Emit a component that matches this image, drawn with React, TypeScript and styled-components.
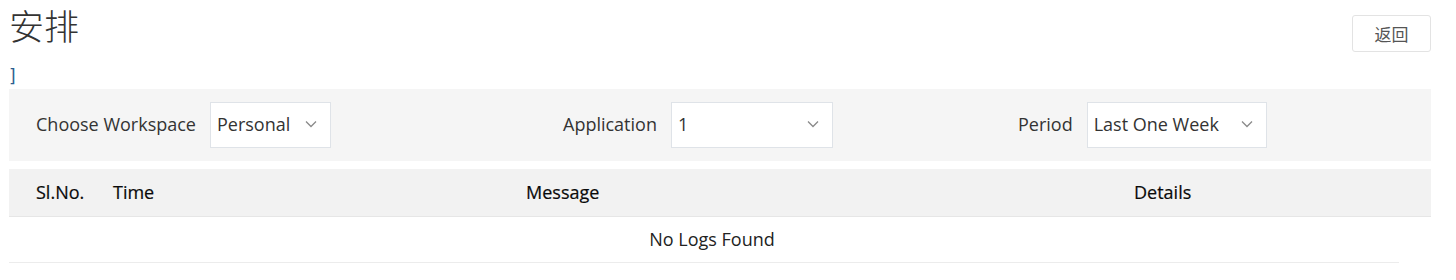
import React from "react";
import styled, { createGlobalStyle } from "styled-components";

const Global = createGlobalStyle`
  html, body { margin: 0; padding: 0; background: #ffffff; }
  body { font-family: "Open Sans", "Noto Sans CJK SC", sans-serif; color: #333; }
  * { box-sizing: border-box; }
`;

const Page = styled.div`
  padding: 0 25px 0 9px;
  width: 1456px;
`;

const Header = styled.div`
  display: flex;
  justify-content: space-between;
  align-items: flex-start;
  height: 66px;
`;

const Title = styled.h1`
  margin: 2px 0 0 0;
  font-family: "Noto Sans CJK SC", sans-serif;
  font-weight: 300;
  font-size: 35px;
  line-height: 46px;
  color: #333;
`;

const BackButton = styled.button`
  margin-top: 15px;
  width: 79px;
  height: 37px;
  border: 1px solid #e3e3e3;
  border-radius: 3px;
  background: #fff;
  font-family: "Noto Sans CJK SC", sans-serif;
  font-size: 17px;
  color: #555;
  padding: 0;
`;

const Bracket = styled.div`
  height: 23px;
  font-family: "DejaVu Sans", sans-serif;
  font-size: 17px;
  line-height: 20px;
  color: #2b5d8e;
`;

const FilterBar = styled.div`
  display: grid;
  grid-template-columns: 527px 455px 1fr;
  align-items: center;
  height: 72px;
  background: #f5f5f5;
  padding-left: 27px;
`;

const Field = styled.div`
  display: flex;
  align-items: center;
  gap: 14px;
`;

const Label = styled.span`
  font-size: 18px;
  line-height: 24px;
  color: #333;
  margin-top: -3px;
`;

const Select = styled.div<{ $w: number }>`
  width: ${(p) => p.$w}px;
  height: 46px;
  background: #fff;
  border: 1px solid #dfe3e8;
  display: flex;
  align-items: center;
  justify-content: space-between;
  padding: 0 13px 2px 6px;
  font-size: 18px;
  color: #333;
`;

const Chevron = () => (
  <svg width="12" height="8" viewBox="0 0 12 8" fill="none">
    <path d="M1 1.5 L6 6.5 L11 1.5" stroke="#8a8a8a" strokeWidth="1.3" />
  </svg>
);

const Table = styled.div`
  margin-top: 8px;
`;

const HeadRow = styled.div`
  display: grid;
  grid-template-columns: 77px 413px 608px 1fr;
  align-items: center;
  height: 48px;
  background: #f2f2f2;
  border-bottom: 1px solid #e6e6e6;
  padding: 0 0 2px 27px;
`;

const HeadCell = styled.div`
  font-size: 18px;
  color: #0a0a0a;
  -webkit-text-stroke: 0.2px #0a0a0a;
`;

const EmptyRow = styled.div`
  width: 1390px;
  height: 46px;
  border-bottom: 1px solid #ececec;
  display: flex;
  align-items: center;
  justify-content: center;
  padding: 0 0 2px 16px;
  font-size: 18px;
  color: #222;
`;

export default function App() {
  return (
    <>
      <Global />
      <Page>
        <Header>
          <Title>安排</Title>
          <BackButton>返回</BackButton>
        </Header>
        <Bracket>]</Bracket>
        <FilterBar>
          <Field>
            <Label>Choose Workspace</Label>
            <Select $w={121}>
              <span>Personal</span>
              <Chevron />
            </Select>
          </Field>
          <Field>
            <Label>Application</Label>
            <Select $w={162}>
              <span>1</span>
              <Chevron />
            </Select>
          </Field>
          <Field>
            <Label>Period</Label>
            <Select $w={180}>
              <span>Last One Week</span>
              <Chevron />
            </Select>
          </Field>
        </FilterBar>
        <Table>
          <HeadRow>
            <HeadCell>Sl.No.</HeadCell>
            <HeadCell>Time</HeadCell>
            <HeadCell>Message</HeadCell>
            <HeadCell>Details</HeadCell>
          </HeadRow>
          <EmptyRow>No Logs Found</EmptyRow>
        </Table>
      </Page>
    </>
  );
}
